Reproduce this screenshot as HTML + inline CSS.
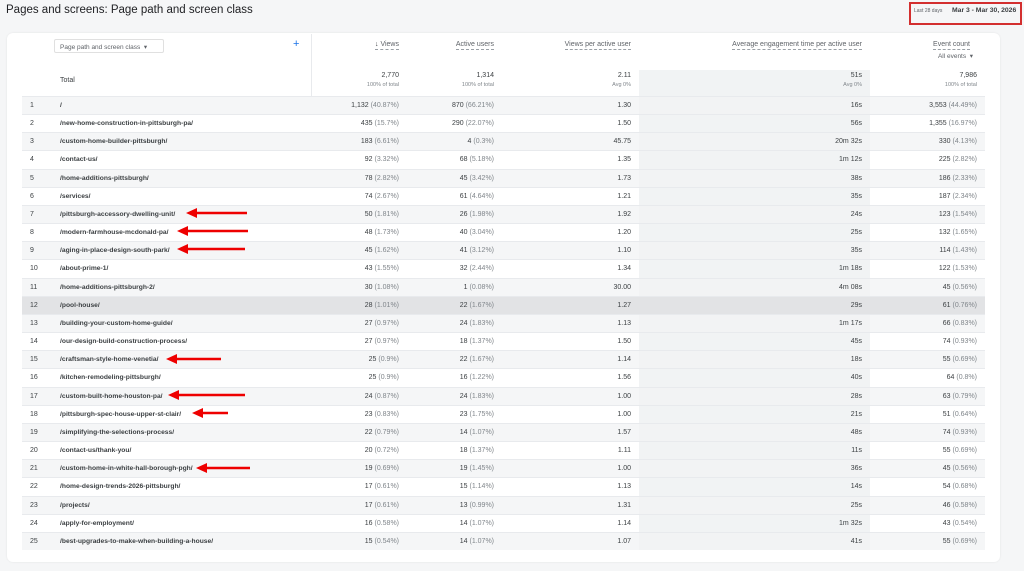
<!DOCTYPE html>
<html><head><meta charset="utf-8"><style>
*{margin:0;padding:0;box-sizing:border-box}
body{width:1024px;height:571px;background:#f5f6f7;font-family:"Liberation Sans",Arial,sans-serif;color:#3c4043;position:relative;overflow:hidden}
.abs{position:absolute;white-space:nowrap}
.card{position:absolute;left:7px;top:33px;width:993px;height:529px;background:#fff;border-radius:6px;box-shadow:0 0 2px rgba(0,0,0,.08)}
.band{position:absolute;left:639px;top:70px;width:231px;height:480px;background:#f1f3f4}
.row{position:absolute;left:22px;width:963px;height:18.16px;border-top:1px solid #e8eaed;font-size:7px}
.row.o{background:rgba(241,243,244,.75)}
.row.h{background:#e2e3e5}
.row span{position:absolute;top:5px}
.r{text-align:right}
.g{color:#80868b}
.hd{font-size:7px;color:#5f6368;border-bottom:1px dashed #9aa0a6;padding-bottom:1px}
</style></head><body>
<div class="abs" style="left:6px;top:4px;font-size:11.5px;color:#202124">Pages and screens: Page path and screen class</div>
<div class="abs" style="left:909px;top:2px;width:113px;height:23px;border:2px solid #d32f2f"></div>
<div class="abs" style="left:914px;top:8px;font-size:5px;color:#5f6368">Last 28 days</div>
<div class="abs" style="left:952px;top:7px;font-size:6.8px;font-weight:bold;color:#3c4043">Mar 3 - Mar 30, 2026</div>
<div class="card"></div>
<div class="band"></div>
<div class="abs" style="left:311px;top:34px;width:1px;height:62px;background:#e8eaed"></div>
<div class="abs" style="left:54px;top:39px;width:110px;height:14px;border:1px solid #e0e0e0;border-radius:2px;font-size:6.5px;color:#5f6368;padding:3px 5px">Page path and screen class &nbsp;▾</div>
<div class="abs" style="left:293px;top:38px;font-size:11px;color:#1a73e8">+</div>
<div class="abs hd" style="right:625px;top:41px"><b style="color:#3c4043">↓</b> Views</div>
<div class="abs hd" style="right:530px;top:41px">Active users</div>
<div class="abs hd" style="right:393px;top:41px">Views per active user</div>
<div class="abs hd" style="right:162px;top:41px">Average engagement time per active user</div>
<div class="abs hd" style="right:54px;top:41px">Event count</div>
<div class="abs" style="right:51px;top:52px;font-size:6.5px;color:#5f6368">All events &nbsp;▾</div>
<div class="abs" style="left:60px;top:77px;font-size:7px">Total</div>
<div class="abs r" style="right:625px;top:72px;font-size:7px">2,770<br><span class="g" style="font-size:5.5px;line-height:12px">100% of total</span></div>
<div class="abs r" style="right:530px;top:72px;font-size:7px">1,314<br><span class="g" style="font-size:5.5px;line-height:12px">100% of total</span></div>
<div class="abs r" style="right:393px;top:72px;font-size:7px">2.11<br><span class="g" style="font-size:5.5px;line-height:12px">Avg 0%</span></div>
<div class="abs r" style="right:162px;top:72px;font-size:7px">51s<br><span class="g" style="font-size:5.5px;line-height:12px">Avg 0%</span></div>
<div class="abs r" style="right:47px;top:72px;font-size:7px">7,986<br><span class="g" style="font-size:5.5px;line-height:12px">100% of total</span></div>
<div id="rows"></div>
<svg class="abs" style="left:0;top:0" width="1024" height="571">
<g fill="none" stroke="#e00" stroke-width="2.4">
<path d="M247 213H192"/><path d="M248 231H183"/><path d="M245 249H183"/><path d="M221 359H172"/><path d="M245 395H174"/><path d="M228 413H198"/><path d="M250 468H202"/>
</g>
<g fill="#e00">
<path d="M186 213l11-5v10z"/><path d="M177 231l11-5v10z"/><path d="M177 249l11-5v10z"/><path d="M166 359l11-5v10z"/><path d="M168 395l11-5v10z"/><path d="M192 413l11-5v10z"/><path d="M196 468l11-5v10z"/>
</g>
</svg>
<script>
var d=[["/","1,132","40.87%","870","66.21%","1.30","16s","3,553","44.49%"],
["/new-home-construction-in-pittsburgh-pa/","435","15.7%","290","22.07%","1.50","56s","1,355","16.97%"],
["/custom-home-builder-pittsburgh/","183","6.61%","4","0.3%","45.75","20m 32s","330","4.13%"],
["/contact-us/","92","3.32%","68","5.18%","1.35","1m 12s","225","2.82%"],
["/home-additions-pittsburgh/","78","2.82%","45","3.42%","1.73","38s","186","2.33%"],
["/services/","74","2.67%","61","4.64%","1.21","35s","187","2.34%"],
["/pittsburgh-accessory-dwelling-unit/","50","1.81%","26","1.98%","1.92","24s","123","1.54%"],
["/modern-farmhouse-mcdonald-pa/","48","1.73%","40","3.04%","1.20","25s","132","1.65%"],
["/aging-in-place-design-south-park/","45","1.62%","41","3.12%","1.10","35s","114","1.43%"],
["/about-prime-1/","43","1.55%","32","2.44%","1.34","1m 18s","122","1.53%"],
["/home-additions-pittsburgh-2/","30","1.08%","1","0.08%","30.00","4m 08s","45","0.56%"],
["/pool-house/","28","1.01%","22","1.67%","1.27","29s","61","0.76%"],
["/building-your-custom-home-guide/","27","0.97%","24","1.83%","1.13","1m 17s","66","0.83%"],
["/our-design-build-construction-process/","27","0.97%","18","1.37%","1.50","45s","74","0.93%"],
["/craftsman-style-home-venetia/","25","0.9%","22","1.67%","1.14","18s","55","0.69%"],
["/kitchen-remodeling-pittsburgh/","25","0.9%","16","1.22%","1.56","40s","64","0.8%"],
["/custom-built-home-houston-pa/","24","0.87%","24","1.83%","1.00","28s","63","0.79%"],
["/pittsburgh-spec-house-upper-st-clair/","23","0.83%","23","1.75%","1.00","21s","51","0.64%"],
["/simplifying-the-selections-process/","22","0.79%","14","1.07%","1.57","48s","74","0.93%"],
["/contact-us/thank-you/","20","0.72%","18","1.37%","1.11","11s","55","0.69%"],
["/custom-home-in-white-hall-borough-pgh/","19","0.69%","19","1.45%","1.00","36s","45","0.56%"],
["/home-design-trends-2026-pittsburgh/","17","0.61%","15","1.14%","1.13","14s","54","0.68%"],
["/projects/","17","0.61%","13","0.99%","1.31","25s","46","0.58%"],
["/apply-for-employment/","16","0.58%","14","1.07%","1.14","1m 32s","43","0.54%"],
["/best-upgrades-to-make-when-building-a-house/","15","0.54%","14","1.07%","1.07","41s","55","0.69%"]];
var h="";
d.forEach(function(r,i){var n=i+1,c=n==12?"row h":(n%2?"row o":"row");
h+='<div class="'+c+'" style="top:'+(96+i*18.16)+'px">'+
'<span style="left:8px">'+n+'</span><span style="left:38px;font-weight:bold;font-size:6.7px;color:#3c4043">'+r[0]+'</span>'+
'<span style="right:586px">'+r[1]+' <i class="g" style="font-style:normal">('+r[2]+')</i></span>'+
'<span style="right:491px">'+r[3]+' <i class="g" style="font-style:normal">('+r[4]+')</i></span>'+
'<span style="right:354px">'+r[5]+'</span>'+
'<span style="right:123px">'+r[6]+'</span>'+
'<span style="right:8px">'+r[7]+' <i class="g" style="font-style:normal">('+r[8]+')</i></span></div>';});
document.getElementById("rows").innerHTML=h;
</script>
</body></html>
